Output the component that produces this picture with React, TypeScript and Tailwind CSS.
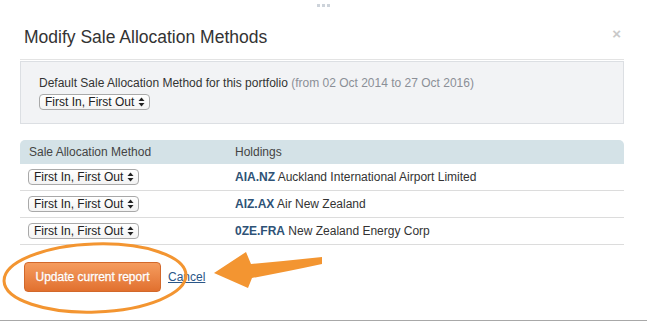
import React from "react";

function Sel({ className = "" }: { className?: string }) {
  return (
    <span
      className={
        "inline-flex items-center h-[16px] rounded-[4px] border border-[#a9a9a9] bg-gradient-to-b from-white to-[#f3f3f3] pl-[5px] pr-[4px] text-[12px] leading-none text-[#222] " +
        className
      }
    >
      <span>First In, First Out</span>
      <svg width="7" height="10" viewBox="0 0 7 10" className="ml-[4px]">
        <path d="M3.5 0.5 L6.5 4 L0.5 4 Z" fill="#222" />
        <path d="M3.5 9.5 L6.5 6 L0.5 6 Z" fill="#222" />
      </svg>
    </span>
  );
}

const rows = [
  { t: "AIA.NZ", n: "Auckland International Airport Limited" },
  { t: "AIZ.AX", n: "Air New Zealand" },
  { t: "0ZE.FRA", n: "New Zealand Energy Corp" },
];

export default function App() {
  return (
    <div
      className="relative w-[647px] h-[321px] bg-white border-b border-[#a8a8a8] overflow-hidden text-[#333]"
      style={{ fontFamily: '"Liberation Sans", Arial, sans-serif' }}
    >
      <div className="flex justify-center gap-[2px] pt-[4px]">
        <span className="w-[3px] h-[3px] bg-[#cdd3da]" />
        <span className="w-[3px] h-[3px] bg-[#cdd3da]" />
        <span className="w-[3px] h-[3px] bg-[#cdd3da]" />
      </div>
      <div className="ml-[20px] w-[604px] mt-[16px] flex items-center justify-between h-[30px] border-b border-[#e3e3e3] pb-[6px] box-content">
        <h1 className="pl-[4px] text-[17.5px] text-[#333] font-normal leading-none">
          Modify Sale Allocation Methods
        </h1>
        <span className="pr-[3px] mb-[9px] text-[15px] font-bold text-[#c9c9c9] leading-none">×</span>
      </div>

      <div className="ml-[20px] w-[604px] mt-[1px] h-[63px] bg-[#f2f3f5] border border-[#dcdfe3] pl-[18px] pt-[14px]">
        <div className="text-[12px] leading-[15px]">
          Default Sale Allocation Method for this portfolio{" "}
          <span className="text-[#8b8f97]">(from 02 Oct 2014 to 27 Oct 2016)</span>
        </div>
        <div className="mt-[3px] flex">
          <Sel />
        </div>
      </div>

      <div className="ml-[20px] w-[604px] mt-[16px]">
        <div className="flex h-[24px] items-center rounded-t-[5px] bg-[#d4e2e7] text-[12px] text-[#444]">
          <div className="w-[215px] pl-[9px]">Sale Allocation Method</div>
          <div>Holdings</div>
        </div>
        {rows.map((r) => (
          <div key={r.t} className="flex h-[27px] items-center border-b border-[#dcdcdc] text-[12px]">
            <div className="w-[215px] pl-[8px] flex">
              <Sel />
            </div>
            <div>
              <span className="font-bold text-[#2e5276]">{r.t}</span> {r.n}
            </div>
          </div>
        ))}
      </div>

      <div className="flex items-center ml-[24px] mt-[17px]">
        <button className="h-[30px] w-[137px] rounded-[4px] border border-[#d2682b] bg-gradient-to-b from-[#f59c5e] to-[#e1702e] text-[12px] text-white [-webkit-text-stroke:0.3px_white] [text-shadow:0_-1px_0_rgba(0,0,0,0.12)]">
          Update current report
        </button>
        <a className="ml-[7px] text-[12px] text-[#2a5688] underline">Cancel</a>
      </div>

      <svg className="absolute left-0 top-0 pointer-events-none" width="647" height="321">
        <ellipse cx="95" cy="278" rx="91" ry="34" fill="none" stroke="#f39531" strokeWidth="3" transform="rotate(-2 95 278)" />
        <path
          d="M214 273 L246 252 L251 264 Q285 261 322 257 L322 264 Q285 272 252 278 L248 288 Z"
          fill="#f39531"
        />
      </svg>
    </div>
  );
}
